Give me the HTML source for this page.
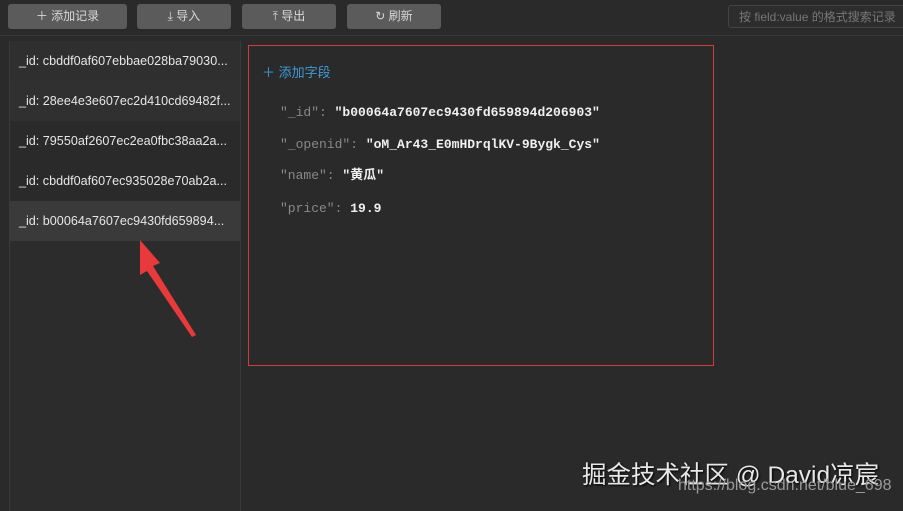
<!DOCTYPE html>
<html><head><meta charset="utf-8"><style>
body{margin:0;width:903px;height:505px;background:#2a2a2a;position:relative;overflow:hidden;font-family:"Liberation Sans","Noto Sans CJK SC",sans-serif;}
.btn{position:absolute;top:4px;height:25px;background:#5b5b5b;border-radius:3px;color:#d8d8d8;font-size:12px;line-height:25px;text-align:center;}
.top{position:absolute;left:0;top:35px;width:903px;height:1px;background:#3a3a3a;}
.search{position:absolute;left:728px;top:5px;width:190px;height:23px;border:1px solid #444;border-radius:3px;background:#2d2d2d;color:#777;font-size:12px;line-height:23px;padding-left:10px;box-sizing:border-box;}
.list{position:absolute;left:9px;top:41px;width:230px;height:470px;background:#2c2c2c;border-left:1px solid #3a3a3a;border-right:1px solid #3a3a3a;}
.row{height:40px;line-height:40px;color:#e6e6e6;font-size:12.6px;padding-left:9px;white-space:nowrap;}
.row.a{background:#2f2f2f}.row.b{background:#2a2a2a}.row.sel{background:#3a3a3a}
.box{position:absolute;left:248px;top:45px;width:464px;height:319px;border:1px solid #d23a3d;}
.add{position:absolute;left:13px;top:16px;color:#3f9bd6;font-size:13px;}
.f{position:absolute;left:31px;height:18px;line-height:18px;font-family:"Liberation Mono","Noto Sans CJK SC",monospace;font-size:13px;color:#888;white-space:nowrap;}
.f b{color:#f0f0f0;font-weight:bold;}
.wm{position:absolute;left:582px;top:456px;color:#e8e8e8;font-size:24.5px;text-shadow:1px 1px 2px #000;white-space:nowrap;}
.wm2{position:absolute;left:678px;top:477px;color:#999;font-size:16px;white-space:nowrap;}
</style></head><body>
<div class="btn" style="left:8px;width:119px">＋ 添加记录</div>
<div class="btn" style="left:137px;width:94px">⤓ 导入</div>
<div class="btn" style="left:242px;width:94px">⤒ 导出</div>
<div class="btn" style="left:347px;width:94px">↻ 刷新</div>
<div class="search">按 field:value 的格式搜索记录</div>
<div class="top"></div>
<div class="list">
<div class="row a">_id: cbddf0af607ebbae028ba79030...</div>
<div class="row a" style="background:#303030">_id: 28ee4e3e607ec2d410cd69482f...</div>
<div class="row b">_id: 79550af2607ec2ea0fbc38aa2a...</div>
<div class="row b">_id: cbddf0af607ec935028e70ab2a...</div>
<div class="row sel">_id: b00064a7607ec9430fd659894...</div>
</div>
<svg style="position:absolute;left:130px;top:235px" width="75" height="110"><polygon points="10,5 30,28 23,31 66,100 62,102 17,36 10,40" fill="#e8393b"/></svg>
<div class="box">
<div class="add">＋ 添加字段</div>
<div class="f" style="top:58px">"_id": <b>"b00064a7607ec9430fd659894d206903"</b></div>
<div class="f" style="top:90px">"_openid": <b>"oM_Ar43_E0mHDrqlKV-9Bygk_Cys"</b></div>
<div class="f" style="top:121px">"name": <b>"黄瓜"</b></div>
<div class="f" style="top:154px">"price": <b>19.9</b></div>
</div>
<div class="wm">掘金技术社区 @ David凉宸</div>
<div class="wm2">https://blog.csdn.net/blue_698</div>
</body></html>
